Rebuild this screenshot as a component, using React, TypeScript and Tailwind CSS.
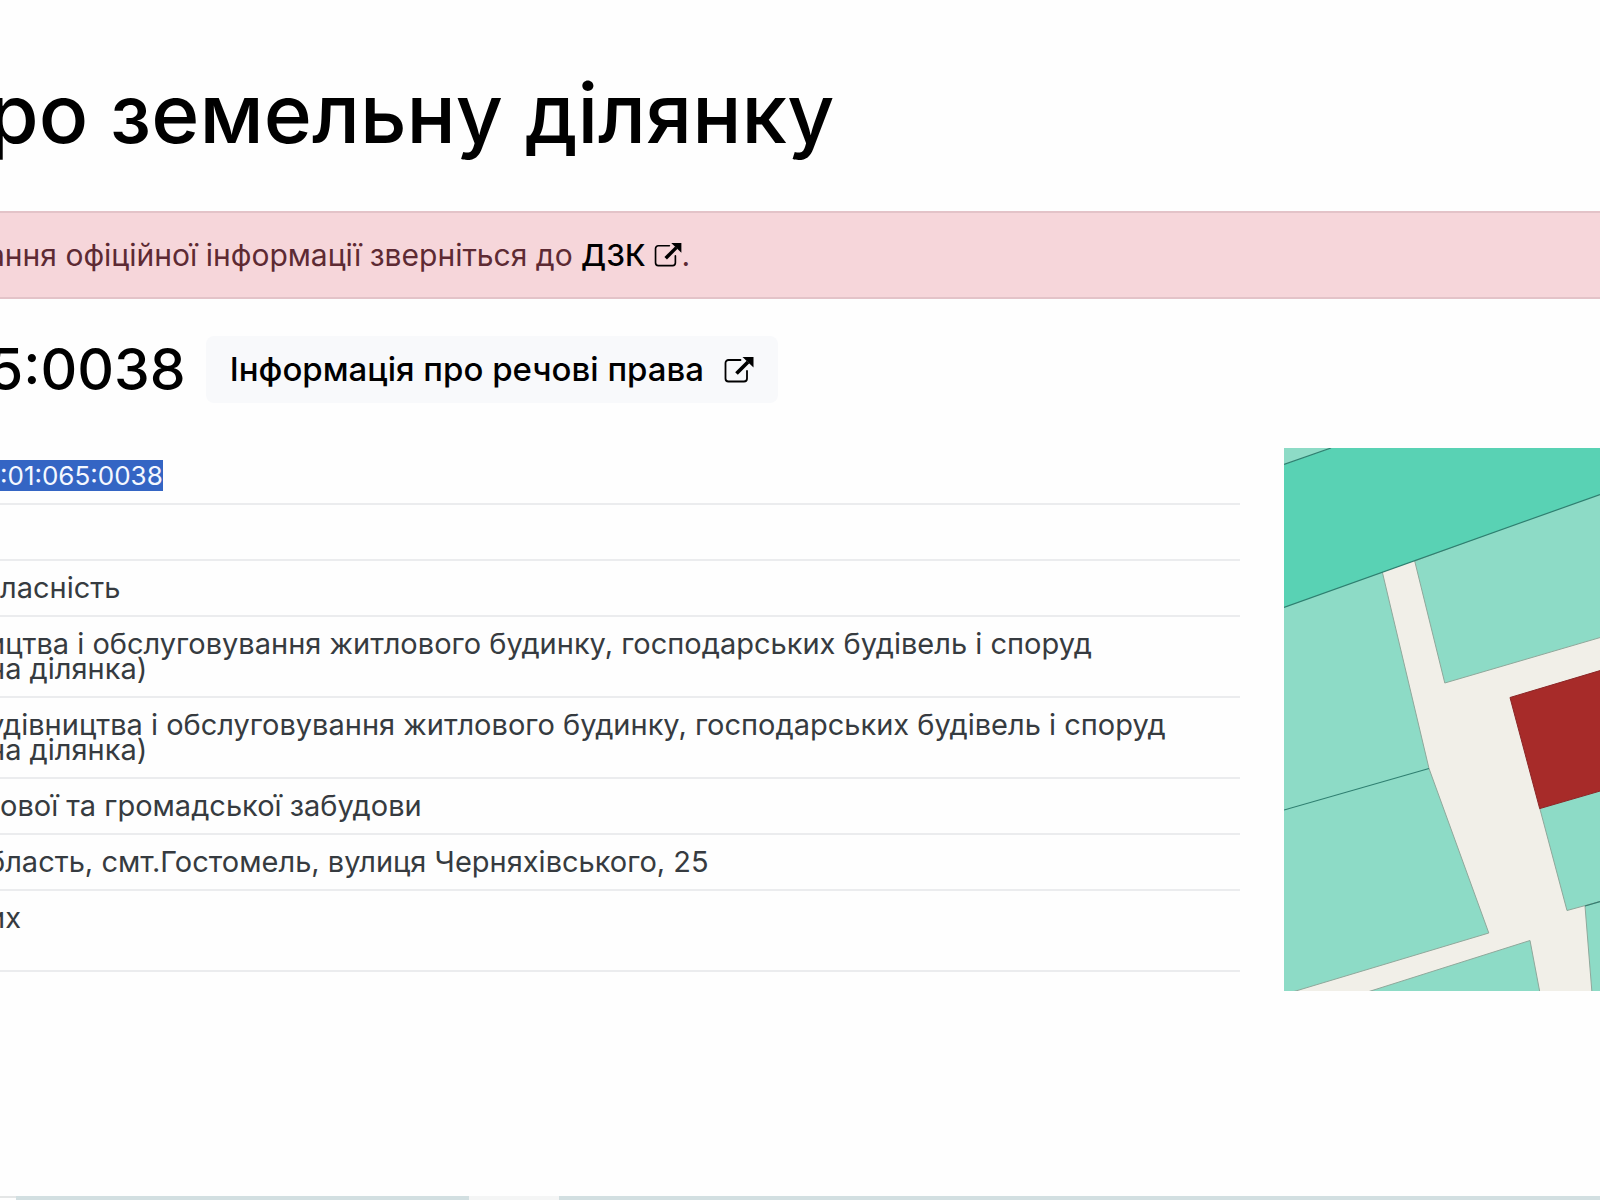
import type { ReactNode } from "react";

type Row = {
  id: string;
  lines: string[];
  flush?: boolean;
  selected?: boolean;
};

const ROWS: Row[] = [
  { id: "number", lines: [":01:065:0038"], flush: true, selected: true },
  { id: "area", lines: [""] },
  { id: "ownership", lines: ["ласність"], flush: true },
  {
    id: "purpose",
    lines: ["ицтва і обслуговування житлового будинку, господарських будівель і споруд", "на ділянка)"],
  },
  {
    id: "purpose-doc",
    lines: ["удівництва і обслуговування житлового будинку, господарських будівель і споруд", "на ділянка)"],
  },
  { id: "category", lines: ["ової та громадської забудови"], flush: true },
  { id: "address", lines: ["бласть, смт.Гостомель, вулиця Черняхівського, 25"] },
  { id: "extra", lines: ["их", ""] },
];

function ExternalIcon({ className }: { className: string }) {
  return (
    <svg className={className} viewBox="0 0 30 26" fill="none" aria-hidden="true">
      <path
        d="M16.5 3H4.5A3 3 0 0 0 1.5 6v15.5a3 3 0 0 0 3 3h15.5a3 3 0 0 0 3-3V14"
        stroke="currentColor"
        strokeWidth={1.8}
        strokeLinecap="round"
      />
      <path d="M12.5 16.5L24 5" stroke="currentColor" strokeWidth={3.8} />
      <path d="M18.5 0H29.5V10.5Z" fill="currentColor" />
    </svg>
  );
}

function Cell({ row }: { row: Row }) {
  const content: ReactNode = row.lines.map((line, i) => (
    <span key={i} className="block min-h-[25px]">
      {row.selected ? (
        <span className="bg-[#3465c4] text-[26px] text-[#f4f8ff]">{line}</span>
      ) : (
        line
      )}
    </span>
  ));
  return (
    <td className={row.flush ? "pt-[14px] pb-[15px] pl-3" : "pt-[14px] pb-[15px]"}>{content}</td>
  );
}

function ParcelMap() {
  return (
    <svg
      className="block h-[543px] w-full"
      viewBox="0 0 316 543"
      preserveAspectRatio="xMinYMin slice"
      role="img"
      aria-label="Карта"
    >
      <rect width="316" height="543" fill="#f1efe8" />
      {/* parcels */}
      <g fill="#8ddbc6" stroke="#8fa89b" strokeWidth={1}>
        <path d="M-2 158L98.3 124L145 320.500L204.8 485L10 543.5H-2Z" />
        <path d="M130.7 113L160.8 235L318 189V44Z" />
        <path d="M85 543.5L246 492.500L256 545H85Z" />
        <path d="M255.7 360L283 462.500L318 453V341Z" />
        <path d="M301 458L308 545H318V453Z" />
      </g>
      <path d="M0 0H47L0 16.5Z" fill="#8ddbc6" />
      <path d="M47 0H316V46.5L0 159.5V16.5Z" fill="#59d2b4" />
      <g stroke="#2f7f70" strokeWidth={1.2}>
        <path d="M0 16.5L47 0" />
        <path d="M0 159.5L316 46.5" />
        <path d="M0 362L145 320.5" />
        <path d="M301 458L316 453.6" />
      </g>
      {/* current parcel */}
      <path d="M226 249.5L318 222V342.5L255.7 360.6Z" fill="#a72b29" stroke="#8c2526" />
    </svg>
  );
}

export default function App() {
  return (
    <div className="min-h-screen overflow-hidden bg-[#fefefe] font-['Inter','Liberation_Sans',sans-serif]">
      <main className="-ml-3 flex flex-col">
        <h1 className="mt-16 text-[82px] leading-[100px] font-medium whitespace-nowrap text-black">
          ро земельну ділянку
        </h1>

        <div
          role="alert"
          className="mt-[47px] border-y-2 border-[#e3c3c8] bg-[#f6d6da] py-6 text-[30px] leading-9 whitespace-nowrap text-[#5d2a33]"
        >
          ання офіційної інформації зверніться до{" "}
          <a href="#dzk" className="font-medium text-black">
            ДЗК <ExternalIcon className="inline-block h-6 w-7 align-[-1px]" />
          </a>
          .
        </div>

        <div className="mt-[37px] flex items-center gap-5">
          <h2 className="text-[57px] leading-[67px] font-medium whitespace-nowrap text-black">5:0038</h2>
          <button
            type="button"
            className="flex h-[67px] items-center gap-5 rounded-lg bg-[#f8f9fb] px-6 text-[33px] font-medium whitespace-nowrap text-black"
          >
            Інформація про речові права
            <ExternalIcon className="h-[26px] w-[30px]" />
          </button>
        </div>

        <section className="mt-[45px] flex gap-11">
          <div className="min-w-0 flex-1">
            <table className="w-full border-collapse text-[29px] leading-[25px] whitespace-nowrap text-[#363b40]">
              <tbody>
                {ROWS.map((row) => (
                  <tr key={row.id} className="border-b-2 border-[#ebecee]">
                    <Cell row={row} />
                  </tr>
                ))}
              </tbody>
            </table>
          </div>
          <div className="w-[316px] shrink-0">
            <ParcelMap />
          </div>
        </section>
      </main>

      <footer className="mt-[205px] flex h-1">
        <div className="w-4 border-t-2 border-[#e4e6e6]" />
        <div className="w-[453px] bg-[#d2dfe1]" />
        <div className="w-[90px] bg-[#f4f5f5]" />
        <div className="flex-1 bg-[#d2dfe1]" />
      </footer>
    </div>
  );
}
